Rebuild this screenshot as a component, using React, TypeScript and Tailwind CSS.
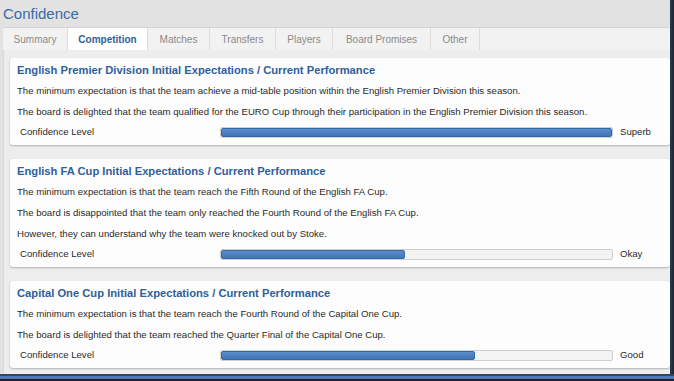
const tabs = ["Summary", "Competition", "Matches", "Transfers", "Players", "Board Promises", "Other"];
const tabWidths = ["w-[65px]", "w-[80px]", "w-[62px]", "w-[66px]", "w-[57px]", "w-[98px]", "w-[49px]"];

type Card = {
  title: string;
  lines: string[];
  level: string;
  fill: number;
};

const cards: Card[] = [
  {
    title: "English Premier Division Initial Expectations / Current Performance",
    lines: [
      "The minimum expectation is that the team achieve a mid-table position within the English Premier Division this season.",
      "The board is delighted that the team qualified for the EURO Cup through their participation in the English Premier Division this season.",
    ],
    level: "Superb",
    fill: 100,
  },
  {
    title: "English FA Cup Initial Expectations / Current Performance",
    lines: [
      "The minimum expectation is that the team reach the Fifth Round of the English FA Cup.",
      "The board is disappointed that the team only reached the Fourth Round of the English FA Cup.",
      "However, they can understand why the team were knocked out by Stoke.",
    ],
    level: "Okay",
    fill: 47,
  },
  {
    title: "Capital One Cup Initial Expectations / Current Performance",
    lines: [
      "The minimum expectation is that the team reach the Fourth Round of the Capital One Cup.",
      "The board is delighted that the team reached the Quarter Final of the Capital One Cup.",
    ],
    level: "Good",
    fill: 65,
  },
];

function ConfidenceCard({ card }: { card: Card }) {
  return (
    <div className="shrink-0 bg-[#fdfdfd] rounded-[3px] shadow-[0_1px_2px_rgba(0,0,0,0.25)] pl-[7px] pr-[8px] pt-[2px] pb-[3px]">
      <div className="h-[20px] leading-[20px] text-[11.2px] font-bold text-[#2f5f9a]">{card.title}</div>
      {card.lines.map((l) => (
        <div key={l} className="h-[21px] leading-[21px] text-[9.6px] text-[#2a2a2a]">
          {l}
        </div>
      ))}
      <div className="flex items-center h-[20px] text-[9.6px] text-[#2a2a2a]">
        <div className="w-[203px] pl-[3px]">Confidence Level</div>
        <div className="w-[393px] h-[11px] bg-[#f3f3f3] border border-[#cfcfcf] rounded-[2px] overflow-hidden">
          <div
            className="h-full bg-gradient-to-b from-[#5a8dcc] to-[#3f74b5] border border-[#3568a6] rounded-[2px]"
            style={{ width: `${card.fill}%` }}
          />
        </div>
        <div className="pl-[7px]">{card.level}</div>
      </div>
    </div>
  );
}

export default function App() {
  return (
    <div className="w-[674px] h-[381px] overflow-hidden bg-[#232a36] flex flex-col font-['Liberation_Sans',Arial,sans-serif]">
      <div className="flex h-[374px] shrink-0">
        <div className="w-[670px] bg-[#e2e2e2] flex flex-col pl-[3px] overflow-hidden">
          <div className="shrink-0 h-[27px] flex items-center text-[15px] text-[#3b6ca6] pt-[1px]">Confidence</div>
          <div className="shrink-0 flex h-[23px] bg-[#f2f2f2] border-t border-[#d4d4d4]">
            {tabs.map((t, i) => (
              <div
                key={t}
                className={`${tabWidths[i]} flex items-center justify-center text-[10px] border-r border-[#dcdcdc] ${
                  i === 1 ? "bg-white text-[#2f5f9a] font-bold" : "text-[#8a8a8a]"
                }`}
              >
                {t}
              </div>
            ))}
          </div>
          <div className="flex-1 bg-[#ededed] border-l border-[#d8d8d8] pl-[6px] pt-[8px] flex flex-col gap-[14px]">
            {cards.map((c) => (
              <ConfidenceCard key={c.title} card={c} />
            ))}
          </div>
        </div>
        <div className="w-[4px] bg-gradient-to-r from-[#2c3a52] to-[#1d2533]" />
      </div>
      <div className="h-[2px] bg-[#3a4456]" />
      <div className="h-[3px] bg-[#4f78b8]" />
      <div className="flex-1 bg-[#1b212c]" />
    </div>
  );
}
